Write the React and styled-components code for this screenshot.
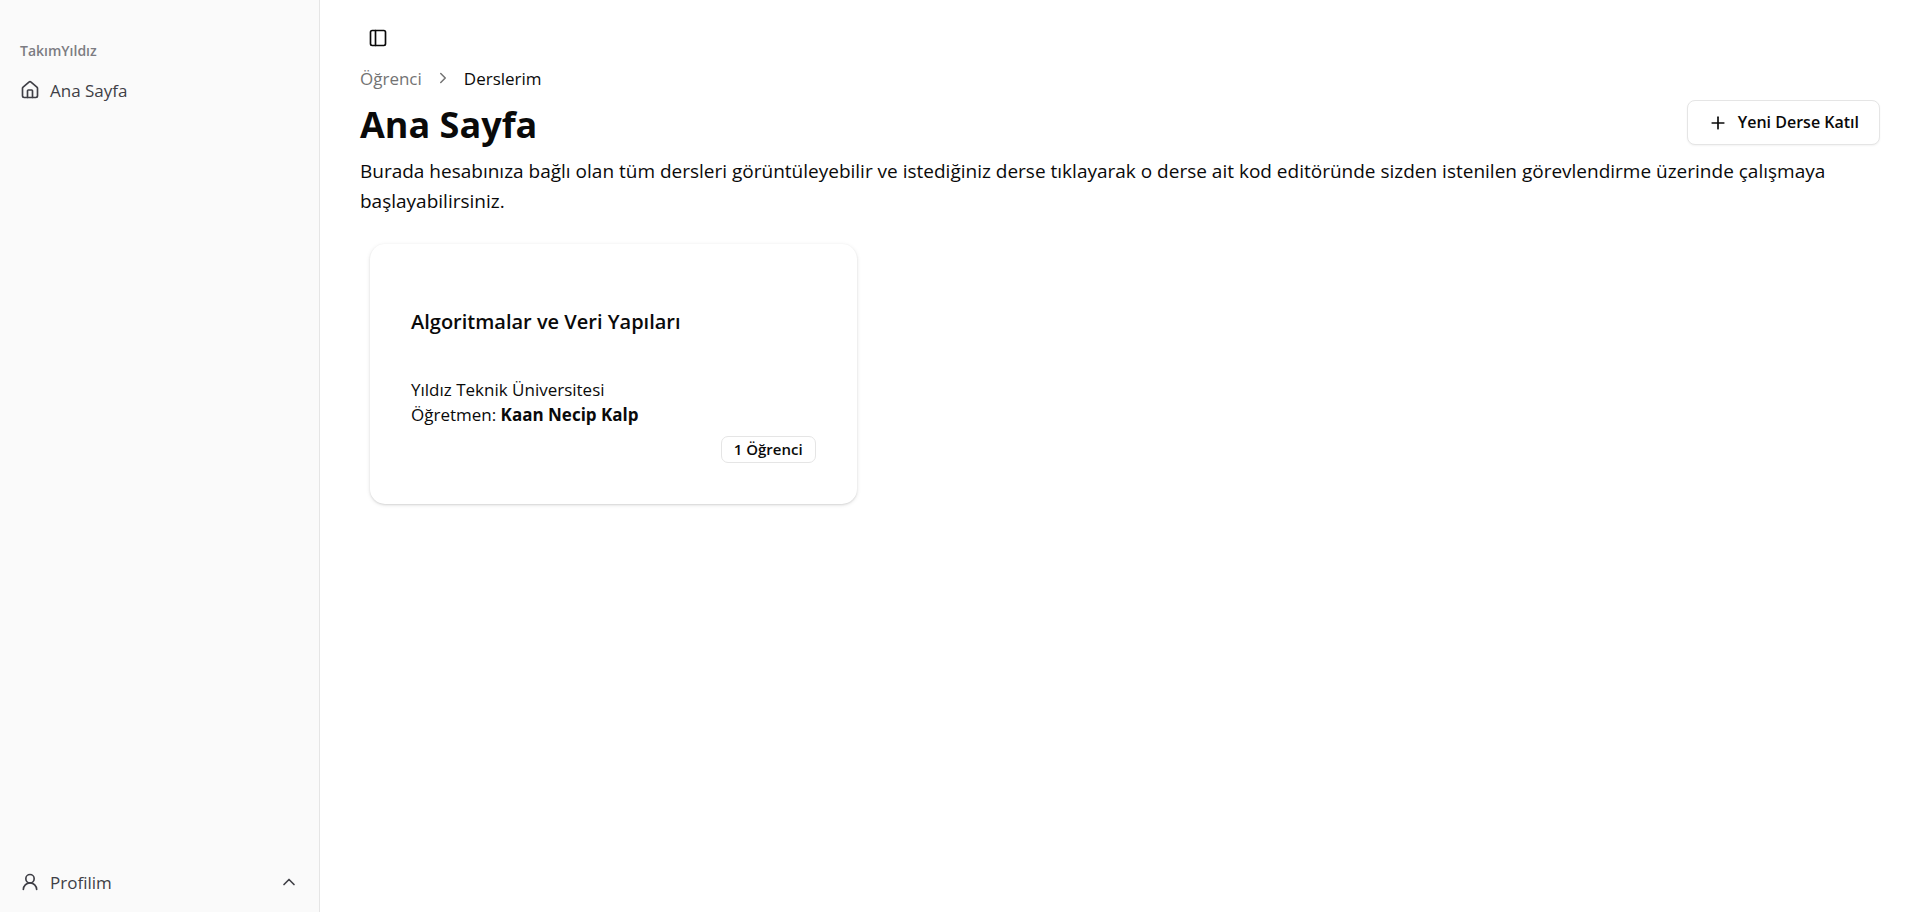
import React from "react";
import styled, { createGlobalStyle } from "styled-components";
import { ChevronRight, ChevronUp, House, PanelLeft, Plus, UserRound } from "lucide-react";

const GlobalStyle = createGlobalStyle`
  *, *::before, *::after { box-sizing: border-box; }
  body {
    margin: 0;
    background: #ffffff;
    color: #0a0a0a;
    font-family: "Segoe UI", "Open Sans", "Noto Sans", sans-serif;
    font-size: 16px;
    line-height: 25px;
  }
  h1, h2, p, ul, ol { margin: 0; padding: 0; }
  ul, ol { list-style: none; }
  a { color: inherit; text-decoration: none; }
  button { font: inherit; color: inherit; cursor: pointer; }
  svg { display: block; flex-shrink: 0; }
`;

const Layout = styled.div`
  display: flex;
  min-height: 100vh;
`;

const Sidebar = styled.aside`
  display: flex;
  flex-direction: column;
  justify-content: space-between;
  width: 320px;
  flex-shrink: 0;
  padding: 30px 10px 10px;
  background: #fafafa;
  border-right: 1px solid #e5e5e5;
  color: #3f3f46;
`;

const GroupLabel = styled.div`
  display: flex;
  align-items: center;
  height: 40px;
  padding: 0 10px;
  font-size: 14px;
  font-weight: 600;
  color: #7c7c82;
`;

const menuItem = `
  display: flex;
  align-items: center;
  gap: 10px;
  width: 100%;
  height: 40px;
  padding: 0 10px;
  border: 0;
  border-radius: 8px;
  background: transparent;
  font-size: 17px;
  text-align: left;
`;

const MenuLink = styled.a`
  ${menuItem}
`;

const MenuButton = styled.button`
  ${menuItem}
`;

const MenuText = styled.span`
  flex: 1;
`;

const Main = styled.main`
  flex: 1;
  min-width: 0;
  padding: 20px 40px;
`;

const SidebarTrigger = styled.button`
  display: flex;
  align-items: center;
  justify-content: center;
  width: 36px;
  height: 36px;
  padding: 0;
  border: 0;
  border-radius: 8px;
  background: transparent;
`;

const Breadcrumb = styled.ol`
  display: flex;
  align-items: center;
  gap: 12px;
  height: 44px;
  font-size: 17px;
`;

const Crumb = styled.li`
  color: ${(p) => (p.$current ? "#0a0a0a" : "#737373")};
`;

const Heading = styled.div`
  display: flex;
  align-items: center;
  justify-content: space-between;
  height: 45px;
`;

const PageTitle = styled.h1`
  padding-top: 4px;
  font-size: 36px;
  line-height: 45px;
  font-weight: 700;
`;

const JoinButton = styled.button`
  display: flex;
  align-items: center;
  gap: 10px;
  height: 45px;
  padding: 0 20px;
  border: 1px solid #e5e5e5;
  border-radius: 8px;
  background: #ffffff;
  box-shadow: 0 1px 2px rgba(0, 0, 0, 0.05);
  font-size: 16px;
  font-weight: 600;
`;

const Intro = styled.p`
  padding-top: 11px;
  font-size: 19px;
  line-height: 30px;
`;

const CourseGrid = styled.ul`
  display: grid;
  grid-template-columns: repeat(3, 1fr);
  gap: 20px;
  padding: 28px 10px;
`;

const CourseCard = styled.a`
  display: flex;
  flex-direction: column;
  padding: 62px 41px 41px;
  border-radius: 15px;
  background: #ffffff;
  box-shadow: 0 1px 4px rgba(0, 0, 0, 0.1), 0 1px 2px rgba(0, 0, 0, 0.1);
  font-size: 17px;
`;

const CourseTitle = styled.h2`
  padding-bottom: 39px;
  font-size: 20px;
  line-height: 32px;
  font-weight: 600;
`;

const StudentCount = styled.span`
  align-self: flex-end;
  margin-top: 9px;
  padding: 0 12px;
  border: 1px solid #e5e5e5;
  border-radius: 7px;
  font-size: 15px;
  font-weight: 600;
`;

export default function App() {
  return (
    <>
      <GlobalStyle />
      <Layout>
        <Sidebar>
          <nav>
            <GroupLabel>TakımYıldız</GroupLabel>
            <MenuLink href="#home">
              <House size={20} />
              <MenuText>Ana Sayfa</MenuText>
            </MenuLink>
          </nav>
          <MenuButton type="button">
            <UserRound size={20} />
            <MenuText>Profilim</MenuText>
            <ChevronUp size={20} />
          </MenuButton>
        </Sidebar>
        <Main>
          <SidebarTrigger type="button" aria-label="Kenar çubuğu">
            <PanelLeft size={20} />
          </SidebarTrigger>
          <nav>
            <Breadcrumb>
              <Crumb><a href="#student">Öğrenci</a></Crumb>
              <Crumb><ChevronRight size={18} /></Crumb>
              <Crumb $current>Derslerim</Crumb>
            </Breadcrumb>
          </nav>
          <Heading>
            <PageTitle>Ana Sayfa</PageTitle>
            <JoinButton type="button">
              <Plus size={20} />
              Yeni Derse Katıl
            </JoinButton>
          </Heading>
          <Intro>
            Burada hesabınıza bağlı olan tüm dersleri görüntüleyebilir ve istediğiniz derse tıklayarak o derse ait kod editöründe sizden istenilen görevlendirme üzerinde çalışmaya başlayabilirsiniz.
          </Intro>
          <CourseGrid>
            <li>
              <CourseCard href="#course">
                <CourseTitle>Algoritmalar ve Veri Yapıları</CourseTitle>
                <p>Yıldız Teknik Üniversitesi</p>
                <p>Öğretmen: <strong>Kaan Necip Kalp</strong></p>
                <StudentCount>1 Öğrenci</StudentCount>
              </CourseCard>
            </li>
          </CourseGrid>
        </Main>
      </Layout>
    </>
  );
}
